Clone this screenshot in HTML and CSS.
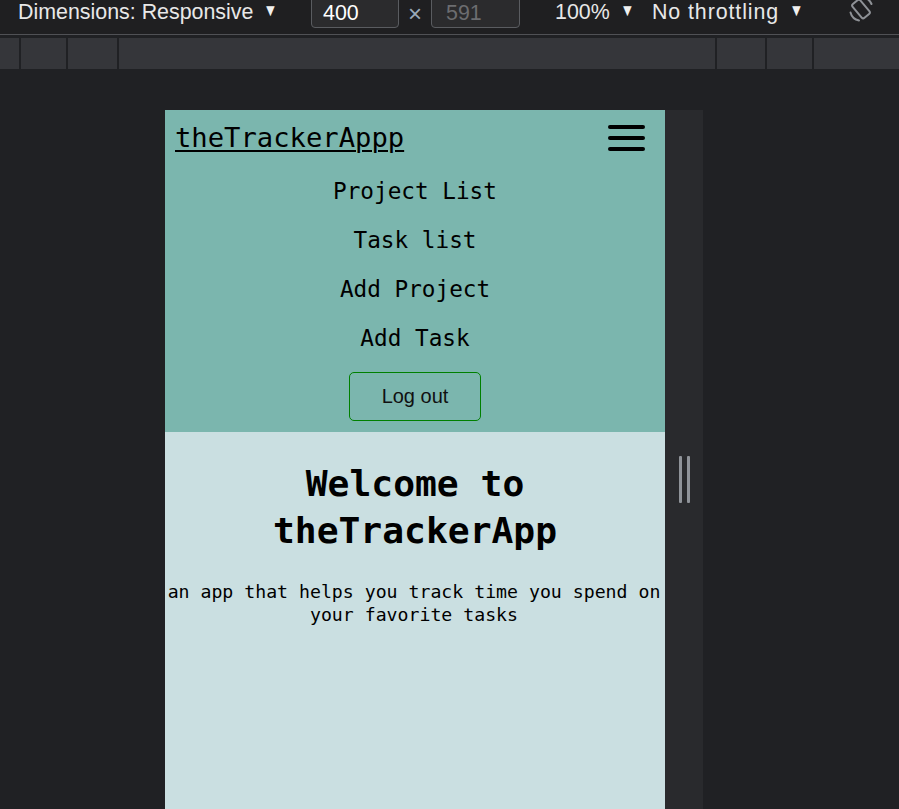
FILE: index.html
```html
<!DOCTYPE html>
<html lang="en">
<head>
<meta charset="utf-8">
<title>theTrackerApp – device mode</title>
<link rel="stylesheet" href="styles.css">
</head>
<body>
  <div class="toolbar">
    <div class="tb-dim"><span>Dimensions: Responsive</span><span class="caret">▼</span></div>
    <div class="tb-input tb-w">400</div>
    <div class="tb-x">×</div>
    <div class="tb-input tb-h">591</div>
    <div class="tb-zoom"><span>100%</span><span class="caret">▼</span></div>
    <div class="tb-throttle"><span class="spaced">No throttling</span><span class="caret">▼</span></div>
    <div class="tb-rotate">
      <svg width="30" height="30" viewBox="0 0 30 30" fill="none" stroke="#8e9196" stroke-width="2">
        <rect x="10" y="5" width="10" height="18" rx="2" transform="rotate(-40 15 14)"/>
        <path d="M4.5 17.5 A11 11 0 0 0 13 25.5" stroke-linecap="round"/>
        <path d="M25.5 9 A11 11 0 0 0 18 2.5" stroke-linecap="round"/>
      </svg>
    </div>
  </div>
  <div class="mediabar">
    <div class="seg s1"></div>
    <div class="seg s2"></div>
    <div class="seg s3"></div>
    <div class="seg s4"></div>
    <div class="seg s5"></div>
    <div class="seg s6"></div>
    <div class="seg s7"></div>
  </div>
  <div class="stage">
    <div class="device">
      <nav class="nav">
        <div class="nav-head">
          <a class="logo" href="#">theTrackerAppp</a>
          <div class="burger"><span></span><span></span><span></span></div>
        </div>
        <ul class="links">
          <li>Project List</li>
          <li>Task list</li>
          <li>Add Project</li>
          <li>Add Task</li>
        </ul>
        <div class="logout-row"><button class="logout">Log out</button></div>
      </nav>
      <main class="main">
        <h1 class="title">Welcome to theTrackerApp</h1>
        <p class="lead">an app that helps you track time you spend on your favorite tasks</p>
      </main>
    </div>
    <div class="handle"><div class="grip"><span></span><span></span></div></div>
  </div>
</body>
</html>
```

FILE: styles.css
```css
html, body {
  margin: 0;
  padding: 0;
}
body {
  background: #202124;
  height: 809px;
  overflow: hidden;
  font-family: "Liberation Sans", Arial, sans-serif;
}

/* ---------- DevTools toolbar ---------- */
.toolbar {
  height: 35px;
  box-sizing: border-box;
  background: #1f1f21;
  border-bottom: 1px solid #505155;
  display: flex;
  align-items: flex-start;
  color: #e8e8e8;
  font-size: 21.4px;
  line-height: normal;
  padding-left: 18px;
}
.caret {
  display: inline-block;
  font-size: 17px;
  margin-left: 9px;
  transform: scaleX(0.85);
  position: relative;
  top: -3px;
  color: #f0f0f0;
}
.tb-dim {
  width: 293px;
  white-space: nowrap;
}
.tb-input {
  margin-top: -6px;
  height: 34px;
  box-sizing: border-box;
  border: 1px solid #5a5c60;
  border-radius: 4px;
  background: #2b2b2d;
  padding: 6px 0 0 11px;
}
.tb-w {
  width: 88px;
  color: #ffffff;
}
.tb-h {
  width: 89px;
  color: #6c6d70;
  padding-left: 14px;
}
.tb-x {
  width: 32px;
  text-align: center;
  color: #9aaab8;
  font-size: 24px;
}
.tb-zoom {
  margin-left: 35px;
  width: 97px;
  white-space: nowrap;
}
.tb-throttle {
  width: 194px;
  white-space: nowrap;
}
.spaced {
  letter-spacing: 0.9px;
}
.tb-rotate {
  margin-top: -5px;
  line-height: 0;
}

/* ---------- media query bar ---------- */
.mediabar {
  margin-top: 3px;
  height: 31px;
  display: flex;
  background: #35363a;
}
.seg {
  height: 31px;
  border-right: 2px solid #202124;
  box-sizing: border-box;
}
.s1 { width: 21px; }
.s2 { width: 47px; }
.s3 { width: 51px; }
.s4 { width: 598px; }
.s5 { width: 50px; }
.s6 { width: 47px; }
.s7 { flex: 1; border-right: none; }

/* ---------- device stage ---------- */
.stage {
  margin-top: 41px;
  margin-left: 165px;
  display: flex;
  height: 700px;
}
.device {
  width: 500px;
  display: flex;
  flex-direction: column;
  font-family: "DejaVu Sans Mono", "Liberation Mono", monospace;
  color: #000;
}
.handle {
  width: 38px;
  background: #292a2d;
  display: flex;
  justify-content: center;
}
.grip {
  margin-top: 346px;
  height: 47px;
  display: flex;
  gap: 5px;
}
.grip span {
  width: 3px;
  background: #8f9399;
  border-radius: 1px;
}

/* ---------- app nav ---------- */
.nav {
  background: #7bb6ae;
  padding: 0 20px 11px 11px;
}
.nav-head {
  height: 57px;
  display: flex;
  align-items: center;
  justify-content: space-between;
}
.logo {
  font-size: 27.2px;
  color: #000;
  text-decoration: underline;
  text-decoration-thickness: 2px;
  text-underline-offset: 3px;
  position: relative;
  top: -1px;
  margin-left: -1px;
}
.burger {
  width: 37px;
  display: flex;
  flex-direction: column;
  gap: 7px;
  position: relative;
  top: -1px;
}
.burger span {
  height: 4px;
  background: #000;
  border-radius: 2px;
}
.links {
  list-style: none;
  margin: 0;
  padding: 0 0 0 9px;
  text-align: center;
  font-size: 22.7px;
  line-height: 49px;
}
.logout-row {
  display: flex;
  justify-content: center;
  margin-top: 9px;
  padding-left: 9px;
}
.logout {
  width: 132px;
  height: 49px;
  border: 1px solid #008000;
  border-radius: 5px;
  background: transparent;
  font-family: "Liberation Sans", Arial, sans-serif;
  font-size: 20px;
  color: #111;
  padding: 0;
}

/* ---------- main ---------- */
.main {
  flex: 1;
  background: #cadfe1;
  text-align: center;
}
.title {
  margin: 28px 60px 0;
  font-size: 36.3px;
  line-height: 47px;
  font-weight: bold;
}
.lead {
  margin: 26px 0 0;
  padding-right: 2px;
  font-size: 18.2px;
  line-height: 23px;
}
```
